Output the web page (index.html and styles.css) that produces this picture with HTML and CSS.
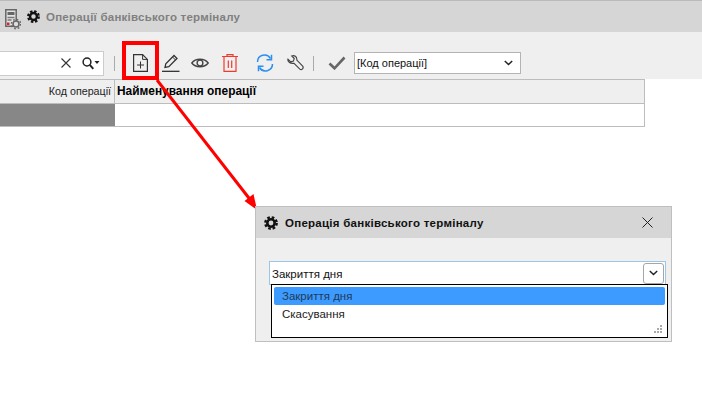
FILE: index.html
```html
<!DOCTYPE html>
<html lang="uk">
<head>
<meta charset="utf-8">
<title>Операції банківського терміналу</title>
<link rel="stylesheet" href="styles.css">
</head>
<body>
<div class="page">
  <header class="titlebar">
    <svg class="app-icon" width="16" height="21" viewBox="0 0 16 21">
      <path d="M.8.800h10.400v16.400H.8z" fill="#e4e4e4" stroke="#666" stroke-width="1.500"/>
      <path d="M2.500 3h7v3h-7z" fill="#666"/>
      <path d="M2.500 8.500h7M2.500 11h4" stroke="#777" stroke-width="1.300"/>
      <rect x="2" y="13.500" width="2.500" height="2.500" fill="#e02020"/>
      <circle cx="11" cy="15" r="3" fill="#ddd" stroke="#666" stroke-width="1.600"/>
      <circle cx="11" cy="15" r="4.700" fill="none" stroke="#666" stroke-width="1.400" stroke-dasharray="1.700 2"/>
    </svg>
    <svg class="gear" width="13" height="13" viewBox="0 0 14 14"><use href="#gear"/></svg>
    <span class="title-text">Операції банківського терміналу</span>
  </header>
  <div class="toolbar">
    <div class="search">
      <svg width="10" height="10" viewBox="0 0 10 10" class="clear"><path d="M.5.500l9 9M9.500.500l-9 9" stroke="#333" stroke-width="1.100"/></svg>
      <svg width="18" height="13" viewBox="0 0 18 13"><circle cx="5" cy="5" r="3.900" fill="none" stroke="#222" stroke-width="1.500"/><path d="M7.800 7.800l3.500 4" stroke="#222" stroke-width="1.900"/><path d="M12.500 4h5l-2.500 3z" fill="#222"/></svg>
    </div>
    <span class="sep"></span>
    <svg class="tool tool-new" width="15" height="18" viewBox="0 0 15 18"><path d="M.6.600h9l4.800 4.800v12H.6z" fill="none" stroke="#333" stroke-width="1.200"/><path d="M9.600.6v4.800h4.800" fill="none" stroke="#333"/><path d="M7.500 7.500v7M4 11h7" stroke="#333"/></svg>
    <svg class="tool tool-pen" width="18" height="18" viewBox="0 0 18 18"><path d="M3 13.500l.8-3.800L12 1.500l3 3-8.200 8.200z" fill="none" stroke="#333" stroke-width="1.300"/><path d="M10.500 3l3 3" stroke="#333"/><path d="M0 17.300h17.500" stroke="#222" stroke-width="1.200"/></svg>
    <svg class="tool tool-eye" width="18" height="12" viewBox="0 0 18 12"><path d="M.8 6C4.500 1 13.500 1 17.200 6 13.500 11 4.500 11 .8 6z" fill="none" stroke="#444" stroke-width="1.400"/><circle cx="9" cy="6" r="2.900" fill="none" stroke="#444" stroke-width="1.400"/></svg>
    <svg class="tool tool-trash" width="16" height="18" viewBox="0 0 16 18"><path d="M0 2.500h16M5 2.500V.6h6v1.900" fill="none" stroke="#f03a2e" stroke-width="1.200"/><path d="M2 3v14.400h12V3" fill="none" stroke="#f03a2e" stroke-width="1.200"/><path d="M6.300 6.500v7.500M9.700 6.500v7.500" stroke="#f03a2e" stroke-width="1.200"/></svg>
    <svg class="tool tool-refresh" width="18" height="18" viewBox="0 0 18 18"><path d="M1.500 8A7 7 0 0 1 14.500 4.500M16.500 10A7 7 0 0 1 3.500 13.500" fill="none" stroke="#2b8ef0" stroke-width="1.500"/><path d="M15.500.8v5h-5M2.500 17.200v-5h5" fill="none" stroke="#2b8ef0" stroke-width="1.500"/></svg>
    <svg class="tool tool-wrench" width="17" height="17" viewBox="0 0 18 18"><path d="M1 4.500L4 7.300l2.800-.8.900-2.800L5 1C7.800-.2 10.800 1.800 10.400 5.400l6.200 6.400c1.500 1.900-1.100 4.800-3 3.100L7.200 8.700C3.800 9.200.3 7.500 1 4.500z" fill="none" stroke="#444" stroke-width="1.200"/></svg>
    <span class="sep sep-second"></span>
    <svg class="tool tool-check" width="18" height="14" viewBox="0 0 18 14"><path d="M1.500 7.500l5 4.800L16.500 1.500" fill="none" stroke="#666" stroke-width="2.600"/></svg>
    <div class="select"><span>[Код операції]</span><svg width="9" height="6" viewBox="0 0 9 6"><path d="M.8 1l3.700 3.500L8.200 1" fill="none" stroke="#222" stroke-width="1.500"/></svg></div>
  </div>
  <div class="table">
    <div class="th th-code">Код операції</div>
    <div class="th th-name">Найменування операції</div>
    <div class="td td-code"></div>
    <div class="td td-name"></div>
  </div>
</div>

<svg class="arrow" width="110" height="130" viewBox="0 0 110 130"><path d="M2 0L97 122" stroke="#f00" stroke-width="3"/><path d="M102 130L89.500 121 98.500 114z" fill="#f00"/></svg>
<div class="highlight"></div>

<section class="dialog">
  <div class="dialog-head">
    <svg width="14" height="14" viewBox="0 0 14 14"><use href="#gear"/></svg>
    <span class="dialog-title">Операція банківського терміналу</span>
    <svg class="dialog-close" width="11" height="11" viewBox="0 0 11 11"><path d="M.5.500l10 10M10.500.500l-10 10" stroke="#222"/></svg>
  </div>
  <div class="dialog-body">
    <div class="combo">
      <span class="combo-text">Закриття дня</span>
      <span class="combo-btn"><svg width="9" height="6" viewBox="0 0 9 6"><path d="M.8 1l3.700 3.500L8.200 1" fill="none" stroke="#222" stroke-width="1.500"/></svg></span>
    </div>
    <div class="dropdown">
      <div class="option option-active">Закриття дня</div>
      <div class="option">Скасування</div>
      <svg class="grip" width="9" height="8" viewBox="0 0 9 8"><path d="M6 0h2v2H6zM3 3h2v2H3zM6 3h2v2H6zM0 6h2v2H0zM3 6h2v2H3zM6 6h2v2H6z" fill="#aaa"/></svg>
    </div>
  </div>
</section>

<svg width="0" height="0" class="defs"><defs>
  <g id="gear"><circle cx="7" cy="7" r="3.700" fill="none" stroke="#111" stroke-width="2.600"/><circle cx="7" cy="7" r="5.700" fill="none" stroke="#111" stroke-width="2.400" stroke-dasharray="2.600 1.880"/></g>
</defs></svg>
</body>
</html>
```
FILE: styles.css
```css
* { box-sizing: border-box; }
html, body { margin: 0; padding: 0; background: #fff; }
body {
  position: relative;
  width: 702px;
  height: 410px;
  overflow: hidden;
  font-family: "Liberation Sans", Arial, sans-serif;
  font-size: 12px;
  color: #111;
}
.page { display: flex; flex-direction: column; }
.defs { position: absolute; }

.titlebar {
  height: 32px;
  background: #d6d6d6;
  border-top: 1px solid #bbb;
  display: flex;
  align-items: center;
  padding-left: 5px;
}
.app-icon { margin-top: 6px; }
.gear { margin-left: 6px; }
.title-text {
  margin-left: 6px;
  font-size: 11.500px;
  font-weight: bold;
  color: #808080;
  letter-spacing: 0.230px;
}

.toolbar {
  height: 47px;
  background: #efefef;
  display: flex;
  align-items: center;
  padding-top: 15px;
}
.search {
  width: 104px;
  height: 25px;
  background: #fff;
  border: 1px solid #ccc;
  border-left: 0;
  display: flex;
  align-items: center;
  justify-content: flex-end;
  padding-right: 3px;
  gap: 11px;
}
.sep { width: 1px; height: 15px; background: #aaa; margin-left: 10px; }
.tool { flex: none; }
.tool-new { margin-left: 18px; }
.tool-pen { margin-left: 14px; }
.tool-eye { margin-left: 11px; }
.tool-trash { margin-left: 13px; }
.tool-refresh { margin-left: 18px; }
.tool-wrench { margin-left: 13px; }
.sep-second { margin-left: 9px; }
.tool-check { margin-left: 14px; }
.select {
  margin-left: 8px;
  width: 167px;
  height: 22px;
  background: #fff;
  border: 1px solid #b4b4b4;
  display: flex;
  align-items: center;
  justify-content: space-between;
  padding: 0 7px 0 2px;
  color: #111;
  font-size: 11px;
}

.table {
  width: 645px;
  display: grid;
  grid-template-columns: 115px 530px;
  grid-template-rows: 24px 23px;
  border-top: 1px solid #bdbdbd;
}
.th {
  background: #efefef;
  border-bottom: 1px solid #bdbdbd;
  line-height: 23px;
  white-space: nowrap;
  border-right: 1px solid #bdbdbd;
}
.th-code { text-align: right; padding-right: 3px; font-size: 10.700px; color: #222; }
.th-name { padding-left: 2px; font-weight: bold; font-size: 11.900px; color: #000; }
.td { border-bottom: 1px solid #bdbdbd; }
.td-code { background: #878787; }
.td-name { border-right: 1px solid #bdbdbd; }

.highlight {
  position: absolute;
  left: 122px;
  top: 41px;
  width: 37px;
  height: 39px;
  border: 4px solid #f00;
}
.arrow { position: absolute; left: 155px; top: 80px; }

.dialog {
  position: absolute;
  left: 255px;
  top: 206px;
  width: 417px;
  height: 136px;
  background: #efefef;
  border: 1px solid #bfbfbf;
  display: flex;
  flex-direction: column;
}
.dialog-head {
  height: 31px;
  background: #d6d6d6;
  display: flex;
  align-items: center;
  padding: 0 18px 0 8px;
}
.dialog-title {
  margin-left: 7px;
  font-size: 11.500px;
  font-weight: bold;
  color: #111;
  letter-spacing: 0.260px;
}
.dialog-close { margin-left: auto; }
.dialog-body { padding: 23px 5px 0 13px; position: relative; flex: 1; }
.combo {
  height: 24px;
  background: #fff;
  border: 1px solid #9cc5ea;
  display: flex;
  align-items: center;
  justify-content: space-between;
  padding: 0 1px 0 2px;
  font-size: 11.500px;
}
.combo-text { padding-top: 2px; }
.combo-btn {
  width: 21px;
  height: 21px;
  background: #fff;
  border: 1px solid #a6a6a6;
  border-radius: 3px;
  display: flex;
  align-items: center;
  justify-content: center;
}
.dropdown {
  position: absolute;
  left: 15px;
  top: 46px;
  width: 397px;
  height: 54px;
  background: #fff;
  border: 1px solid #000;
  padding: 2px;
  font-size: 11.500px;
}
.option { height: 18px; line-height: 18px; padding-left: 8px; color: #222; }
.option-active { background: #3d9bff; border-radius: 2px; color: #1d3a5a; }
.grip { position: absolute; right: 4px; bottom: 4px; }
```
